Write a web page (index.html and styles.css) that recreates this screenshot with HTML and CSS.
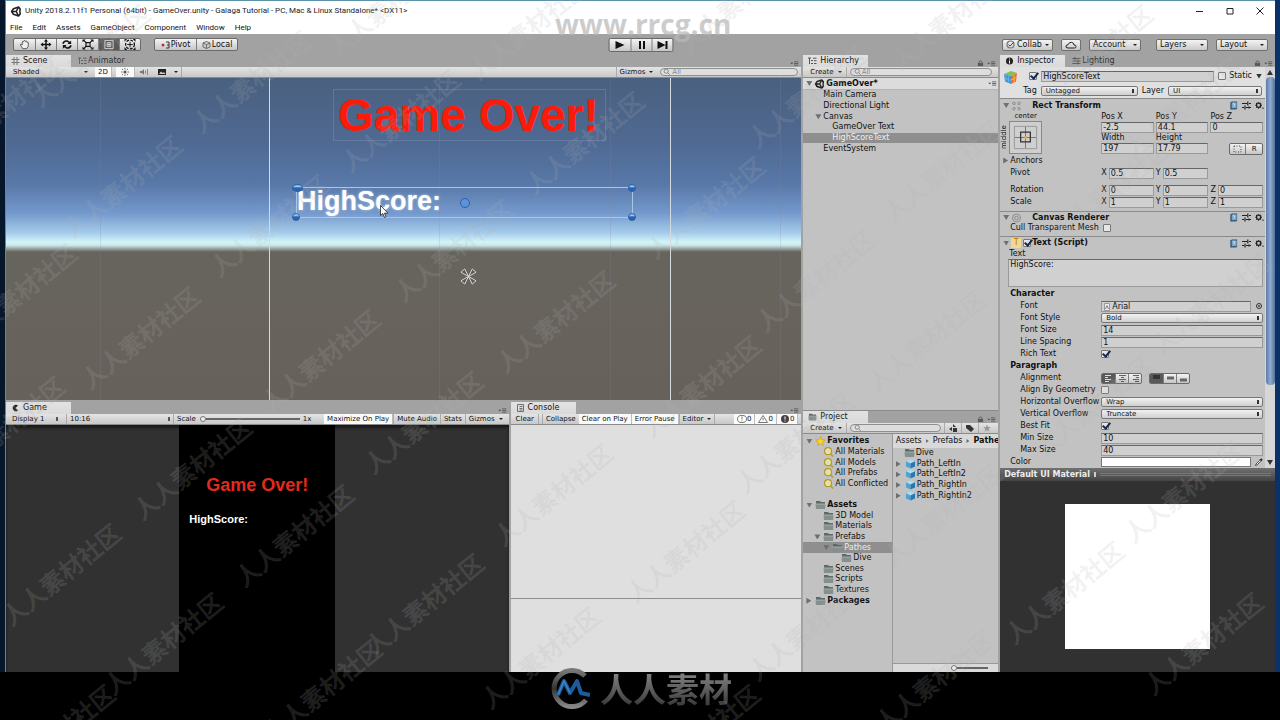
FILE: index.html
```html
<!DOCTYPE html>
<html lang="en">
<head>
<meta charset="utf-8">
<title>Unity 2018.2.11f1 Personal (64bit) - GameOver.unity</title>
<link rel="stylesheet" href="styles.css">
</head>
<body>
<svg class="defs" aria-hidden="true">
  <symbol id="unity" viewBox="0 0 12 12"><path d="M6.2 6 1.2 6 3.2 3 8.8 1.2M1.2 6 3.2 9 8.8 10.8M6.2 6 8.8 1.2 10.6 3.2 10.2 6 10.6 8.8 8.8 10.8 6.2 6" fill="none" stroke="currentColor" stroke-width="1.700" stroke-linejoin="round"/></symbol>
  <symbol id="folder" viewBox="0 0 11 10"><path d="M1 1h4l1 1h4v7H1z" fill="#5f6a69"/><path d="M.5 4h10l-.5 5H1z" fill="#84908e"/><path d="M.5 4h10" stroke="#b9c2c0" stroke-width=".7"/></symbol>
  <symbol id="search" viewBox="0 0 10 10"><circle cx="4.500" cy="4.200" r="3.500" fill="#efe79a" stroke="#b59a2c" stroke-width="1.200"/><circle cx="4.500" cy="4.200" r="1.800" fill="#d8dcc4"/><path d="M7 6.800 9.500 9.500" stroke="#b59a2c" stroke-width="1.600"/></symbol>
  <symbol id="lens" viewBox="0 0 10 10"><circle cx="4" cy="4" r="2.600" fill="none" stroke="#777"/><path d="M6 6 8.500 8.500" stroke="#777"/></symbol>
  <symbol id="cube" viewBox="0 0 10 10"><path d="M5 .5 9.500 2.300 5 4.500.5 2.300z" fill="#a9dcf5"/><path d="M.5 2.300 5 4.500v5L.5 7.500z" fill="#4da2d8"/><path d="M9.500 2.300 5 4.500v5l4.500-2z" fill="#2777b0"/></symbol>
  <symbol id="book" viewBox="0 0 9 10"><path d="M1 1.500 3 .5h5.500v8l-1 1H1z" fill="#33506f"/><path d="M2.500 1.500h5.500v6.500H2.500z" fill="#7ea5cb"/><path d="M4 3.500q1.300-1.500 2 0 .2.800-.8 1.300V6" fill="none" stroke="#fff" stroke-width=".8"/></symbol>
  <symbol id="preset" viewBox="0 0 9 9"><path d="M0 2.500h5M7 2.500h2M0 6.500h2M4 6.500h5M5.800.5v4M3 4.500v4M7 5.500v2" stroke="#222" stroke-width="1.200"/></symbol>
  <symbol id="gear" viewBox="0 0 10 9"><circle cx="4" cy="4.200" r="2.300" fill="none" stroke="#222" stroke-width="1.500"/><path d="M4 .5v1M4 7v1M.4 4.200h1M6.600 4.200h1M1.400 1.600l.8.8M5.900 6l.8.800M1.400 6.800l.8-.8M5.900 2.400l.8-.8" stroke="#222" stroke-width="1.200"/><path d="M8 7.500h1.800" stroke="#222"/></symbol>
  <symbol id="lock" viewBox="0 0 8 8"><path d="M1 4h6v3.500H1z" fill="#5a5a5a"/><path d="M2.300 4V2.500q1.700-2 3.400 0V4" fill="none" stroke="#5a5a5a"/></symbol>
  <symbol id="menu" viewBox="0 0 10 6"><path d="M0 2h3.500L1.800 4z" fill="#444"/><path d="M4.500 1h5M4.500 3h5M4.500 5h5" stroke="#555" stroke-width="1"/></symbol>
  <symbol id="grid" viewBox="0 0 8 8"><path d="M2.500 0v8M5.500 0v8M0 2.500h8M0 5.500h8" stroke="#777"/></symbol>
  <symbol id="tree" viewBox="0 0 9 8"><path d="M0 1h3M1.500 1v6M3 3.500h2M3 6.500h2M5 1.200h3.500M6 3.700h2.500M6 6.500h2.500" stroke="#555" fill="none"/></symbol>
</svg>

<main class="desktop">
<div class="window">
  <header class="title">
    <svg class="i12"><use href="#unity"/></svg>
    <span class="grow">Unity 2018.2.11f1 Personal (64bit) - GameOver.unity - Galaga Tutorial - PC, Mac &amp; Linux Standalone* &lt;DX11&gt;</span>
    <button class="wbtn" aria-label="Minimize"><svg viewBox="0 0 8 8"><path d="M0 4.500h7" stroke="#222"/></svg></button>
    <button class="wbtn" aria-label="Maximize"><svg viewBox="0 0 8 8"><path d="M1 1.500h6v5.500H1z" fill="none" stroke="#222"/></svg></button>
    <button class="wbtn" aria-label="Close"><svg viewBox="0 0 8 8"><path d="M.5.500l7 7M7.500.500l-7 7" stroke="#222"/></svg></button>
  </header>
  <nav class="menubar"><button>File</button><button>Edit</button><button>Assets</button><button>GameObject</button><button>Component</button><button>Window</button><button>Help</button></nav>

  <div class="toolbar">
    <div class="tools seg">
      <button aria-label="Hand"><svg viewBox="0 0 14 12"><path d="M4.500 10.500 2 6.500q0-1.200 1.200-.8L4 6.500V3q.7-1 1.400 0 .2-1.800 1.500-1.200.8.200.8 1 .8-1 1.500 0v1q1-.8 1.500.2L10.500 8 9 10.500z" fill="#eee" stroke="#444" stroke-width=".9"/></svg></button>
      <button aria-label="Move"><svg viewBox="0 0 14 12"><path d="M7 1.500v9M2.500 6h9" stroke="#111" stroke-width="1.600"/><path d="M7 0 9.200 2.800H4.800zM7 12 4.800 9.200h4.400zM1 6l2.800-2.200v4.400zM13 6l-2.800 2.200V3.800z" fill="#111"/></svg></button>
      <button aria-label="Rotate"><svg viewBox="0 0 14 12"><path d="M2.500 5Q4 1.500 7.500 2.300L10 4M11.500 7Q10 10.500 6.500 9.700L4 8" fill="none" stroke="#111" stroke-width="1.700"/><path d="M11.500 1.500v4h-4zM2.500 10.500v-4h4z" fill="#111"/></svg></button>
      <button aria-label="Scale"><svg viewBox="0 0 14 12"><path d="M4.800 4h4.400v4H4.800z" fill="none" stroke="#111" stroke-width="1.300"/><path d="M2 1.200 5 4M12 1.200 9 4M2 10.800 5 8M12 10.800 9 8" stroke="#111" stroke-width="1.300"/><path d="M1 .5h3.500L1 3.500zM13 .5v3L9.500.5zM1 11.500v-3l3.500 3zM13 11.500H9.500l3.500-3z" fill="#111"/></svg></button>
      <button class="on" aria-label="Rect"><svg viewBox="0 0 14 12"><path d="M2.500 1.500h9v9h-9z" fill="none" stroke="#ddd"/><path d="M5 4h4v4H5z" fill="none" stroke="#ddd"/><circle cx="7" cy="6" r="1" fill="#fff"/></svg></button>
      <button aria-label="Transform"><svg viewBox="0 0 14 12"><circle cx="7" cy="6" r="4.800" fill="none" stroke="#111" stroke-width="1.400" stroke-dasharray="3 1.500"/><path d="M7 3v6M4 6h6" stroke="#111"/><path d="M1 0h3L1 3zM13 0v3l-3-3zM1 12V9l3 3zM13 12h-3l3-3z" fill="#111"/></svg></button>
    </div>
    <div class="seg pivots">
      <button><svg viewBox="0 0 9 8"><circle cx="2" cy="4" r="1.500" fill="#b33"/><path d="M5 1h3v6H5M6 4h2" fill="none" stroke="#333"/></svg>Pivot</button>
      <button><svg viewBox="0 0 9 8"><path d="M1 2l3.500-1.500L8 2v4L4.500 7.500 1 6zM1 2l3.500 1.500L8 2M4.500 3.500v4" fill="#ccc" stroke="#555" stroke-width=".8"/></svg>Local</button>
    </div>
    <div class="seg play">
      <button aria-label="Play"><svg viewBox="0 0 12 10"><path d="M2 1v8l9-4z" fill="#111"/></svg></button>
      <button aria-label="Pause"><svg viewBox="0 0 12 10"><path d="M3.500 1h2v8h-2zM7.500 1h2v8h-2z" fill="#111"/></svg></button>
      <button aria-label="Step"><svg viewBox="0 0 12 10"><path d="M1 1v8l8-4zM9 1h2v8H9z" fill="#111"/></svg></button>
    </div>
    <div class="account">
      <button class="pill collab"><svg viewBox="0 0 9 9"><circle cx="4.500" cy="4.500" r="3.500" fill="none" stroke="#777" stroke-width="1.200"/><path d="M2.500 4.500 4 6l4-4" fill="none" stroke="#444"/></svg>Collab<i class="dn"></i></button>
      <button class="pill cl" aria-label="Cloud"><svg class="cloud" viewBox="0 0 12 8"><path d="M3 7Q.5 7 1 5q.5-1.300 2-1.200Q4 1 6.500 1.300 9 1.800 9 4q2 0 2 1.500T9.500 7z" fill="none" stroke="#222"/></svg></button>
      <button class="pill acc">Account<i class="dn"></i></button>
      <button class="pill lay">Layers<i class="dn"></i></button>
      <button class="pill out">Layout<i class="dn"></i></button>
    </div>
  </div>

  <div class="work">
    <div class="left">
      <section class="panel">
        <div class="tabs"><button class="tab on w65"><svg><use href="#grid"/></svg>Scene</button><button class="tab off"><svg><use href="#tree"/></svg>Animator</button><span class="grow"></span><svg class="menu"><use href="#menu"/></svg></div>
        <div class="bar">
          <button class="shade">Shaded<i class="dn"></i></button>
          <button class="lit">2D</button>
          <button class="lit wide" aria-label="Lighting"><svg viewBox="0 0 10 8"><circle cx="5" cy="4" r="1.500" fill="#555"/><path d="M5 0v1.500M5 6.500V8M1 4h1.500M7.500 4H9M2 1l1.200 1M8 1 6.800 2M2 7l1.200-1M8 7 6.800 6" stroke="#666"/></svg></button>
          <button aria-label="Audio"><svg viewBox="0 0 10 8"><path d="M1 3h2l2-2v6L3 5H1z" fill="#777"/><path d="M6.500 2.500v3M8.500 1v6" stroke="#888"/></svg></button>
          <button class="fx" aria-label="Effects"><svg viewBox="0 0 10 8"><path d="M1 1h8v6H1z" fill="#222"/><path d="M2 6l2-2.500L6 5l1-1 1.500 2z" fill="#ccc"/></svg></button>
          <button class="split fxm" aria-label="Effects menu"><i class="dn"></i></button>
          <span class="grow"></span>
          <button class="split">Gizmos<i class="dn"></i></button>
          <label class="find w138"><svg><use href="#lens"/></svg><input aria-label="Search scene" placeholder="All"></label>
        </div>
        <div class="scene">
          <div class="ln" style="left:94px"></div><div class="ln" style="left:433px"></div><div class="ln" style="left:604px"></div><div class="ln" style="left:774px"></div>
          <div class="frame"></div>
          <div class="over">Game Over!</div>
          <div class="score">HighScore:<i class="knob tl"></i><i class="knob tr"></i><i class="knob bl"></i><i class="knob br"></i><i class="knob mid"></i></div>
          <svg class="cursor" viewBox="0 0 9 13"><path d="M.5.500v10l2.300-2 1.700 4 1.500-.7-1.600-3.600H8z" fill="#fff" stroke="#222" stroke-width=".8"/></svg>
          <svg class="gizmo" viewBox="0 0 18 18"><path d="M9 9 1 4.500 5 1zM9 9l8-4.500L13 1zM9 9l-8 4.500L5 17zM9 9l8 4.500-4 3.500z" fill="#5558" stroke="#ddd" stroke-width="1"/></svg>
        </div>
      </section>
      <div class="lower">
        <section class="panel">
          <div class="tabs"><button class="tab on w65"><svg viewBox="0 0 8 8"><path d="M6.500 1.500A3.200 3.200 0 1 0 6.500 6.500L4 4z" fill="#222"/></svg>Game</button><span class="grow"></span><svg class="menu"><use href="#menu"/></svg></div>
          <div class="bar">
            <select class="disp" aria-label="Display"><option>Display 1</option></select>
            <select class="ratio" aria-label="Aspect"><option>10:16</option></select>
            <label class="scale">Scale<input type="range" min="1" max="5" value="1"></label><span class="one">1x</span>
            <span class="grow"></span>
            <button class="lit">Maximize On Play</button><button class="split">Mute Audio</button><button class="split">Stats</button><button class="split">Gizmos<i class="dn"></i></button>
          </div>
          <div class="game"><div class="screen"><p class="gover">Game Over!</p><p class="ghigh">HighScore:</p></div></div>
        </section>
        <section class="panel">
          <div class="tabs"><button class="tab on w65"><svg viewBox="0 0 8 8"><path d="M1 .5h6v7H1zM3 2.500h3M3 4.500h3M3 6h3" fill="#ddd" stroke="#555" stroke-width=".8"/></svg>Console</button><span class="grow"></span><svg class="menu"><use href="#menu"/></svg></div>
          <div class="bar cons">
            <button class="clear">Clear</button><span class="gap"></span><button class="split">Collapse</button><button class="lit">Clear on Play</button><button class="lit">Error Pause</button><button class="split">Editor<i class="dn"></i></button>
            <span class="grow edge"></span>
            <button class="lit"><svg viewBox="0 0 10 8"><ellipse cx="5" cy="4" rx="4.500" ry="3.600" fill="#fff" stroke="#777"/><path d="M5 1.500v3M5 5.500v1" stroke="#777"/></svg>0</button><button class="lit"><svg viewBox="0 0 10 8"><path d="M5 .5 9.500 7.500h-9z" fill="#fff" stroke="#777"/><path d="M5 3v2.500" stroke="#777"/></svg>0</button><button class="lit"><svg viewBox="0 0 10 8"><circle cx="5" cy="4" r="4" fill="#444"/><path d="M5 1.500v3M5 5.500v1" stroke="#fff"/></svg>0</button>
          </div>
          <div class="console"><div class="log"></div><div class="detail"></div></div>
        </section>
      </div>
    </div>

    <div class="middle">
      <section class="panel">
        <div class="tabs"><button class="tab on w65"><svg><use href="#tree"/></svg>Hierarchy</button><span class="grow"></span><svg class="lock"><use href="#lock"/></svg><svg class="menu"><use href="#menu"/></svg></div>
        <div class="bar"><button>Create<i class="dn"></i></button><label class="find grow split"><svg><use href="#lens"/></svg><input aria-label="Search hierarchy" placeholder="All"></label></div>
        <div class="hier">
          <div class="root"><i class="tri"></i><svg class="i10"><use href="#unity"/></svg><b class="grow">GameOver*</b><svg class="menu"><use href="#menu"/></svg></div>
          <ul class="list h6">
            <li class="d2">Main Camera</li><li class="d2">Directional Light</li><li class="d1"><i class="tri"></i>Canvas</li><li class="d3">GameOver Text</li><li class="d3 sel">HighScoreText</li><li class="d2">EventSystem</li>
          </ul>
        </div>
      </section>
      <section class="panel">
        <div class="tabs"><button class="tab on w65"><svg><use href="#folder"/></svg>Project</button><span class="grow"></span><svg class="lock"><use href="#lock"/></svg><svg class="menu"><use href="#menu"/></svg></div>
        <div class="bar"><button>Create<i class="dn"></i></button><label class="find split grow"><svg><use href="#lens"/></svg><input aria-label="Search project"></label>
          <button class="split" aria-label="Filter by type"><svg viewBox="0 0 10 8"><path d="M5 0 8 3H5zM1 5l3-2v4zM5 4h4v4H5z" fill="#333"/></svg></button><button class="split" aria-label="Filter by label"><svg viewBox="0 0 10 8"><path d="M1 1h4l4 4-3 3-5-4z" fill="#333"/></svg></button><button class="split" aria-label="Save search"><svg viewBox="0 0 10 10"><path d="M5 .5 6.300 3.700l3.400.3-2.600 2.200.8 3.300L5 7.700 2.100 9.500l.8-3.300L.3 4l3.400-.3z" fill="#999"/></svg></button></div>
        <div class="proj">
          <ul class="list h16">
            <li class="a0"><i class="tri"></i><svg class="i10" viewBox="0 0 10 10"><path d="M5 .5 6.300 3.700l3.400.3-2.600 2.200.8 3.300L5 7.700 2.100 9.500l.8-3.300L.3 4l3.400-.3z" fill="#ffd42a" stroke="#c89a10" stroke-width=".6"/></svg><b>Favorites</b></li>
            <li class="a2"><svg class="i10"><use href="#search"/></svg>All Materials</li><li class="a2"><svg class="i10"><use href="#search"/></svg>All Models</li><li class="a2"><svg class="i10"><use href="#search"/></svg>All Prefabs</li><li class="a2"><svg class="i10"><use href="#search"/></svg>All Conflicted</li>
            <li></li>
            <li class="a0"><i class="tri"></i><svg class="i10"><use href="#folder"/></svg><b>Assets</b></li>
            <li class="a2"><svg class="i10"><use href="#folder"/></svg>3D Model</li><li class="a2"><svg class="i10"><use href="#folder"/></svg>Materials</li><li class="a1"><i class="tri"></i><svg class="i10"><use href="#folder"/></svg>Prefabs</li><li class="a3 sel"><i class="tri"></i><svg class="i10"><use href="#folder"/></svg>Pathes</li><li class="a4"><svg class="i10"><use href="#folder"/></svg>Dive</li><li class="a2"><svg class="i10"><use href="#folder"/></svg>Scenes</li><li class="a2"><svg class="i10"><use href="#folder"/></svg>Scripts</li><li class="a2"><svg class="i10"><use href="#folder"/></svg>Textures</li>
            <li class="a0"><i class="tri r"></i><svg class="i10"><use href="#folder"/></svg><b>Packages</b></li>
          </ul>
          <div class="files">
            <div class="crumbs">Assets<i class="tri r"></i>Prefabs<i class="tri r"></i><b>Pathes</b></div>
            <ul class="list h5">
              <li class="a1f"><svg class="i10"><use href="#folder"/></svg>Dive</li><li><i class="tri r"></i><svg class="i10"><use href="#cube"/></svg>Path_LeftIn</li><li><i class="tri r"></i><svg class="i10"><use href="#cube"/></svg>Path_LeftIn2</li><li><i class="tri r"></i><svg class="i10"><use href="#cube"/></svg>Path_RightIn</li><li><i class="tri r"></i><svg class="i10"><use href="#cube"/></svg>Path_RightIn2</li>
            </ul>
            <div class="zoom"><input type="range" aria-label="Icon size" min="0" max="10" value="0"></div>
          </div>
        </div>
      </section>
    </div>

    <section class="panel insp">
      <div class="tabs"><button class="tab on w65"><svg viewBox="0 0 8 8"><circle cx="4" cy="4" r="3.500" fill="#222"/><path d="M4 1.500v1M4 3.500v3" stroke="#fff"/></svg>Inspector</button><button class="tab off"><svg viewBox="0 0 8 8"><path d="M0 1.500h8M0 4h8M0 6.500h8M2.500 0v3M5.500 2.500v5" stroke="#555"/></svg>Lighting</button><span class="grow"></span><svg class="lock"><use href="#lock"/></svg><svg class="menu"><use href="#menu"/></svg></div>
      <div class="ibody">
        <div class="icontent">
          <div class="ohead">
            <svg class="ocube" viewBox="0 0 15 15"><path d="M1 4 8 1l6 2-6 3z" fill="#7cc35a"/><path d="M1 4l7 2v8l-6-2.500z" fill="#3f95d0"/><path d="M14 3 8 6v8l5-2.500z" fill="#ec6b2d"/><path d="M3 5v6M5.500 5.500v7M1.500 8l6.500 2.500" stroke="#69b5e5" stroke-width=".8"/><path d="M11 4.500v8M8 10l5.500-2.500" stroke="#f7b93c"/></svg>
            <div class="oline"><input type="checkbox" checked aria-label="Active"><input class="fld grow" aria-label="Name" value="HighScoreText"><label class="stat"><input type="checkbox">Static</label><i class="tri dk"></i></div>
            <div class="oline two"><label for="tag">Tag</label><select id="tag" class="pop tagw"><option>Untagged</option></select><label for="layer">Layer</label><select id="layer" class="pop grow"><option>UI</option></select></div>
          </div>

          <div class="comp rt">
            <div class="chead"><i class="tri"></i><svg class="i10" viewBox="0 0 10 10"><path d="M3.500 3.500v-2q-2-1.500-2.500 1 0 1 2.500 1M6.500 3.500v-2q2-1.500 2.500 1 0 1-2.500 1M3.500 6.500v2q-2 1.500-2.500-1 0-1 2.500-1M6.500 6.500v2q2 1.500 2.500-1 0-1-2.500-1" fill="none" stroke="#888" stroke-width=".9"/></svg><b class="grow">Rect Transform</b><svg class="hi"><use href="#book"/></svg><svg class="hi"><use href="#preset"/></svg><svg class="hi"><use href="#gear"/></svg></div>
            <div class="rect">
              <div class="anch"><span class="ac">center</span><span class="am">middle</span>
                <button aria-label="Anchor presets"><svg viewBox="0 0 32 32"><path d="M4.500 4.500h23v23h-23z" fill="none" stroke="#999"/><path d="M16 5v22M5 16h22" stroke="#c5564a"/><path d="M11 10.500h10v10H11z" fill="none" stroke="#333" stroke-width="1.300"/><circle cx="16" cy="16" r="1.500" fill="#e7a03c"/></svg></button></div>
              <div class="g3">
                <label for="px">Pos X</label><label for="py">Pos Y</label><label for="pz">Pos Z</label>
                <input class="fld" id="px" value="-2.5"><input class="fld" id="py" value="44.1"><input class="fld" id="pz" value="0">
                <label for="rw">Width</label><label for="rh">Height</label><span></span>
                <input class="fld" id="rw" value="197"><input class="fld" id="rh" value="17.79"><div class="seg br2"><button aria-label="Blueprint"><svg viewBox="0 0 9 8"><path d="M1 1h7v6H1z" fill="none" stroke="#444" stroke-dasharray="1 1.500"/></svg></button><button>R</button></div>
              </div>
            </div>
            <div class="anchors"><i class="tri r"></i>Anchors</div>
            <div class="vec"><span>Pivot</span><label>X<input class="fld" value="0.5"></label><label>Y<input class="fld" value="0.5"></label></div>
            <div class="vec rot"><span>Rotation</span><label>X<input class="fld" value="0"></label><label>Y<input class="fld" value="0"></label><label>Z<input class="fld" value="0"></label></div>
            <div class="vec"><span>Scale</span><label>X<input class="fld" value="1"></label><label>Y<input class="fld" value="1"></label><label>Z<input class="fld" value="1"></label></div>
          </div>

          <div class="comp cr">
            <div class="chead"><i class="tri"></i><svg class="i10" viewBox="0 0 10 10"><circle cx="5" cy="5" r="4" fill="none" stroke="#888" stroke-width=".9"/><circle cx="5" cy="5" r="1.800" fill="none" stroke="#888" stroke-width=".9"/></svg><b class="grow">Canvas Renderer</b><svg class="hi"><use href="#book"/></svg><svg class="hi"><use href="#preset"/></svg><svg class="hi"><use href="#gear"/></svg></div>
            <label class="cull">Cull Transparent Mesh<input type="checkbox"></label>
          </div>

          <div class="comp tx">
            <div class="chead"><i class="tri"></i><span class="ticon">T</span><input type="checkbox" checked aria-label="Text enabled"><b class="grow">Text (Script)</b><svg class="hi"><use href="#book"/></svg><svg class="hi"><use href="#preset"/></svg><svg class="hi"><use href="#gear"/></svg></div>
            <label class="tl" for="txt">Text</label>
            <textarea id="txt">HighScore:</textarea>
            <div class="form">
              <b>Character</b>
              <label for="f1">Font</label><div class="obj"><input class="fld grow" id="f1" value="Arial"><svg class="doc" viewBox="0 0 6 8"><path d="M.5.500h5v7h-5z" fill="#eee" stroke="#888" stroke-width=".8"/><path d="M1.500 6 3 2.500 4.500 6" fill="none" stroke="#555" stroke-width=".7"/></svg><svg class="pick" viewBox="0 0 8 8"><circle cx="4" cy="4" r="2.500" fill="none" stroke="#333"/><circle cx="4" cy="4" r=".9" fill="#333"/></svg></div>
              <label for="f2">Font Style</label><select class="pop" id="f2"><option>Bold</option></select>
              <label for="f3">Font Size</label><input class="fld" id="f3" value="14">
              <label for="f4">Line Spacing</label><input class="fld" id="f4" value="1">
              <label for="f5">Rich Text</label><input type="checkbox" id="f5" checked>
              <b>Paragraph</b>
              <span>Alignment</span><div class="align"><div class="seg al"><button class="on" aria-label="Left"><svg viewBox="0 0 9 8"><path d="M1 1.500h6M1 3.500h3M1 5.500h6M1 7.500h4" stroke="#ddd"/></svg></button><button aria-label="Center"><svg viewBox="0 0 9 8"><path d="M1 1.500h7M3 3.500h3M1 5.500h7M3 7.500h3" stroke="#555"/></svg></button><button aria-label="Right"><svg viewBox="0 0 9 8"><path d="M2 1.500h6M5 3.500h3M2 5.500h6M4 7.500h4" stroke="#555"/></svg></button></div><div class="seg al"><button class="on" aria-label="Top"><svg viewBox="0 0 9 8"><path d="M1 1h7v4H1z" fill="#333"/></svg></button><button aria-label="Middle"><svg viewBox="0 0 9 8"><path d="M1 2.500h7v3H1z" fill="#666"/></svg></button><button aria-label="Bottom"><svg viewBox="0 0 9 8"><path d="M1 4.500h7v3H1z" fill="#666"/></svg></button></div></div>
              <label for="f6">Align By Geometry</label><input type="checkbox" id="f6">
              <label for="f7">Horizontal Overflow</label><select class="pop" id="f7"><option>Wrap</option></select>
              <label for="f8">Vertical Overflow</label><select class="pop" id="f8"><option>Truncate</option></select>
              <label for="f9">Best Fit</label><input type="checkbox" id="f9" checked>
              <label for="f10">Min Size</label><input class="fld" id="f10" value="10">
              <label for="f11">Max Size</label><input class="fld" id="f11" value="40">
              <span class="color">Color</span><div class="obj"><button class="swatch" aria-label="Color"></button><svg class="pick" viewBox="0 0 8 8"><path d="M.5 7.500 1 6l3.500-3.500 1 1L2 7z" fill="#eee" stroke="#333" stroke-width=".8"/><path d="M4.500 1.500 6.500.5l1 1-1 2z" fill="#222"/></svg></div>
            </div>
          </div>
        </div>
        <div class="scroll" aria-hidden="true"><i class="tri up"></i><div class="thumb"></div><i class="tri dk"></i></div>
      </div>
      <div class="phead"><b>Default UI Material</b><i class="ud"></i><span class="grip"></span></div>
      <div class="preview"><div class="white"></div></div>
    </section>
  </div>
</div>
</main>

<footer class="brand">
  <svg viewBox="0 0 44 42"><defs><linearGradient id="ring" x1="0" y1="0" x2="0" y2="1"><stop offset="0" stop-color="#777"/><stop offset=".5" stop-color="#333"/><stop offset="1" stop-color="#888"/></linearGradient></defs><path d="M37 9A18 18 0 1 0 38 33" fill="none" stroke="url(#ring)" stroke-width="5"/><path d="M10 28 16 14l6 12 7-12 4 12 9 2" fill="none" stroke="#1d5c9c" stroke-width="4" stroke-linejoin="round"/><path d="M10 28 16 14l6 12" fill="none" stroke="#3a86cc" stroke-width="1.500"/></svg>
  <span lang="zh">人人素材</span>
</footer>
<div class="site">www.rrcg.cn</div>
<div class="marks" id="marks" lang="zh" aria-hidden="true"></div>
<script src="marks.js"></script>
</body>
</html>
```
FILE: marks.js
```js
const centers = [
  [3,106],[251,81],[400,120],[584,142],[122,186],[269,225],[453,250],[17,294],[140,337],[320,360],
  [555,321],[5,427],[192,468],[294,535],[423,422],[61,574],[424,604],[163,643],[553,494],[540,657],
  [322,690],[528,28],[55,735],[950,18],[738,0],[1093,55],[807,96],[705,207],[942,170],[1183,106],
  [1110,190],[815,280],[926,340],[701,386],[1093,405],[1211,303],[795,441],[685,551],[942,514],
  [1064,592],[1183,491],[807,629],[1203,643],[934,680],[90,55],[387,5],[700,735]
];
const layer = document.getElementById("marks");
for (const [x, y] of centers) {
  const s = document.createElement("span");
  s.textContent = "人人素材社区";
  s.style.left = x + "px";
  s.style.top = y + "px";
  layer.append(s);
}
```
FILE: styles.css
```css
* { box-sizing: border-box; }
body { margin: 0; min-height: 100vh; display: grid; grid-template-rows: 1fr 48px; background: #000; color: #111; font: 8px/10px "DejaVu Sans", sans-serif; position: relative; overflow: hidden; }
button, input, select, textarea { font: inherit; color: inherit; margin: 0; padding: 0; border: 0; border-radius: 0; background: none; min-width: 0; }
ul, p { margin: 0; padding: 0; list-style: none; }
svg { flex: none; }
.defs { position: absolute; width: 0; height: 0; }
.grow { flex: 1; min-width: 0; }
.desktop { background: linear-gradient(90deg, #06162b 50%, #0b3268 50%); padding: 0 5px; display: grid; }
.window { display: flex; flex-direction: column; background: #a2a2a2; border-top: 1px solid #5b93ad; border-left: 1px solid #5d87a8; }
.title { height: 20px; background: #fff; display: flex; align-items: center; padding: 0 2px 0 4px; gap: 3px; font: 8px/12px Roboto, sans-serif; color: #222; }
.i12 { width: 12px; height: 11px; }
.i10 { width: 11px; height: 10px; }
.wbtn { width: 27px; height: 12px; display: grid; place-items: center; }
.wbtn svg { width: 8px; height: 8px; }
.menubar { height: 13px; background: #fff; display: flex; gap: 10px; padding: 0 4px; font: 8px/12px Roboto, sans-serif; }
.toolbar { height: 21px; display: flex; align-items: center; padding: 0 7px; position: relative; }
.seg { display: flex; border: 1px solid #6a6a6a; border-radius: 2px; background: linear-gradient(#f4f4f4, #c6c6c6); overflow: hidden; }
.seg button { display: flex; align-items: center; justify-content: center; gap: 1px; border-left: 1px solid #7c7c7c; height: 11px; }
.seg button:first-child { border-left: 0; }
.seg .on { background: #595959; }
.tools button { width: 21px; }
.tools svg { width: 14px; height: 11px; }
.pivots { margin-left: 13px; }
.pivots button { width: 41px; }
.pivots svg { width: 9px; height: 8px; }
.play { position: absolute; left: 50%; translate: -50% 0; }
.play button { width: 21px; height: 12px; }
.play svg { width: 12px; height: 10px; }
.account { margin-left: auto; display: flex; gap: 8px; }
.pill { height: 12px; border: 1px solid #6f6f6f; border-radius: 2px; background: linear-gradient(#f4f4f4, #cacaca); display: flex; align-items: center; gap: 2px; padding: 0 3px; }
.pill svg { width: 9px; height: 9px; }
.pill svg.cloud { width: 12px; height: 8px; }
.pill .dn { margin-left: auto; }
.collab { width: 51px; }
.cl { width: 20px; }
.acc { width: 52px; }
.lay { width: 52px; margin-left: 7px; }
.out { width: 52px; }
.dn { display: inline-block; border: 2px solid transparent; border-top-color: #222; border-bottom: 0; margin-left: 4px; }
.tri { flex: none; width: 6px; height: 5px; background: #6f6f6f; clip-path: polygon(0 0, 100% 0, 50% 100%); margin-right: 2px; }
.tri.r { width: 5px; height: 6px; clip-path: polygon(0 0, 100% 50%, 0 100%); margin-right: 3px; }
.tri.dk { background: #333; margin: 0; }
.tri.up { background: #333; clip-path: polygon(50% 0, 100% 100%, 0 100%); margin: 0; }

.work { flex: 1; min-height: 0; display: grid; grid-template-columns: 796fr 195fr 275fr; gap: 2px; }
.left { display: grid; grid-template-rows: 345fr 270fr; gap: 2px; min-width: 0; }
.lower { display: grid; grid-template-columns: 503fr 291fr; gap: 2px; min-height: 0; }
.middle { display: grid; grid-template-rows: 356fr 261fr; min-width: 0; }
.panel { display: flex; flex-direction: column; min-width: 0; min-height: 0; }
.tabs { height: 12px; display: flex; flex: none; align-items: stretch; padding-right: 1px; }
.tab { display: flex; align-items: center; gap: 3px; padding: 0 7px; }
.tab svg { width: 9px; height: 8px; }
.tab.on { background: linear-gradient(#e2e2e2, #dadada); padding-left: 5px; }
.tab.off { color: #333; gap: 1px; }
.w65 { width: 65px; }
.menu { width: 9px; height: 5px; align-self: flex-end; margin: 0 1px 1px 3px; }
.lock { width: 7px; height: 8px; align-self: flex-end; }
.bar { height: 11px; flex: none; display: flex; align-items: stretch; background: linear-gradient(#e4e4e4, #c8c8c8); border-bottom: 1px solid #8a8a8a; font-size: 7px; padding: 0 3px; }
.bar button { padding: 0 4px; display: flex; align-items: center; white-space: nowrap; }
.bar button svg { width: 10px; height: 8px; }
.bar .lit { background: #fafafa; border-right: 1px solid #bbb; padding: 0 3px; }
.bar .wide { padding: 0 4px; margin-left: 4px; }
.bar .split { border-left: 1px solid #aaa; padding: 0 3px; }
.bar .shade { width: 83px; margin-right: 3px; }
.bar .fxm { border-right: 1px solid #aaa; border-left: 0; }
.bar .fx { padding-right: 0; }
.shade .dn { margin-left: auto; }
.find { display: flex; align-items: center; padding: 0 6px 0 4px; position: relative; }
.find svg { position: absolute; left: 7px; width: 8px; height: 8px; }
.find input { flex: 1; height: 8px; border: 1px solid #8f8f8f; border-radius: 4px; background: #dedede; padding-left: 11px; line-height: 6px; }
.find input::placeholder { color: #888; opacity: 1; }
.w138 { width: 142px; padding-right: 0; }

.scene { flex: 1; position: relative; overflow: hidden; background: linear-gradient(#4a607f 0%, #4f6992 20%, #5878a8 33%, #7499cc 42%, #a5cbea 48%, #d2f5f9 51%, #c9e6e6 52%, #67645e 54%, #67615b 100%); }
.scene::after { content: ""; position: absolute; top: 0; bottom: 0; left: 263px; width: 400px; border: solid #d5dadf; border-width: 0 1px; }
.ln { position: absolute; top: 0; bottom: 0; width: 1px; background: #8893; }
.frame { position: absolute; left: 327px; top: 11px; width: 273px; height: 52px; border: 1px solid #7d98b866; }
.over { position: absolute; left: 332px; top: 11px; font: bold 46px/52px "Liberation Sans", Arial, sans-serif; color: #fb1b08; white-space: nowrap; }
.score { position: absolute; left: 290px; top: 109px; width: 337px; height: 31px; border: 1px solid #a9c6e6; font: bold 27px/27px "Liberation Sans", Arial, sans-serif; color: #fff; text-shadow: 0 0 3px #fff8; }
.knob { position: absolute; width: 8px; height: 8px; border-radius: 50%; background: linear-gradient(#8fc0f0 35%, #2a62ac 45%); border: 1px solid #2a5fa8; }
.tl.knob { left: -5px; top: -4px; } .tr.knob { right: -4px; top: -4px; } .bl.knob { left: -5px; bottom: -4px; } .br.knob { right: -4px; bottom: -4px; }
.mid.knob { left: 163px; top: 10px; width: 10px; height: 10px; background: #5c93d8; }
.cursor { position: absolute; left: 374px; top: 127px; width: 9px; height: 13px; }
.gizmo { position: absolute; left: 454px; top: 190px; width: 17px; height: 17px; }

select { appearance: none; background: conic-gradient(#555 0 0) right 3px center / 2px 4px no-repeat; }
.disp { width: 52px; padding-left: 3px; } .ratio { width: 107px; border-left: 1px solid #aaa; margin-left: 5px; padding-left: 3px; }
.scale { display: flex; align-items: center; gap: 4px; padding-left: 3px; border-left: 1px solid #aaa; }
.scale input { width: 100px; }
.one { align-self: center; padding-left: 3px; }
input[type=range] { appearance: none; height: 2px; background: #666; }
input[type=range]::-webkit-slider-thumb { appearance: none; width: 6px; height: 6px; border: 1px solid #777; border-radius: 50%; background: #eee; }
.game { flex: 1; background: #313131; display: flex; justify-content: center; box-shadow: inset 0 3px 3px #1a1a1a; }
.screen { width: 156px; background: #000; font-family: "Liberation Sans", Arial, sans-serif; font-weight: bold; }
.gover { color: #e32a1c; font-size: 18px; line-height: 20px; text-align: center; padding-top: 50px; }
.ghigh { color: #fff; font-size: 11px; line-height: 12px; padding: 18px 0 0 10px; }
.bar .clear { padding: 0 4px 0 2px; }
.gap { width: 4px; border-left: 1px solid #aaa; }
.edge { border-left: 1px solid #aaa; }
.console { flex: 1; background: #dfdfdf; display: grid; grid-template-rows: 175fr 73fr; }
.log { border-bottom: 1px solid #8d8d8d; }

.hier { flex: 1; background: #c2c2c2; border-bottom: 1px solid #8a8a8a; }
.root { height: 12px; background: #dcdcdc; display: flex; align-items: center; padding-left: 3px; border-bottom: 1px solid #b4b4b4; }
.root b { padding-left: 1px; }
.root .menu { align-self: center; }
.list { display: grid; grid-auto-rows: 1fr; align-content: stretch; }
.list li { display: flex; align-items: center; white-space: nowrap; min-height: 0; gap: 1px; }
.h6 { height: 64px; } .h16 { height: 172px; padding-top: 2px; } .h5 { height: 53px; }
.list .d1 { padding-left: 12px; } .list .d2 { padding-left: 20px; } .list .d3 { padding-left: 29px; }
.list .d1 { gap: 0; }
.list .sel { background: #8f8f8f; color: #eee; }
.list .a0 { padding-left: 3px; } .list .a1 { padding-left: 11px; } .list .a2 { padding-left: 20px; } .list .a3 { padding-left: 20px; } .list .a4 { padding-left: 38px; } .list .a1f { padding-left: 11px; }
.proj { flex: 1; display: grid; grid-template-columns: 88fr 106fr; background: #c2c2c2; min-height: 0; }
.files { border-left: 1px solid #999; display: flex; flex-direction: column; min-width: 0; }
.crumbs { height: 14px; background: #d9d9d9; display: flex; align-items: center; gap: 3px; padding-left: 3px; overflow: hidden; }
.crumbs .tri.r { width: 3px; height: 4px; margin: 0 1px; }
.files li { padding-left: 3px; }
.zoom { margin-top: auto; height: 9px; background: #dadada; border-top: 1px solid #999; display: flex; align-items: center; justify-content: flex-end; padding-right: 10px; }
.zoom input { width: 37px; }

.insp { background: #a2a2a2; }
.ibody { display: flex; background: #c2c2c2; }
.icontent { flex: 1; min-width: 0; }
.scroll { width: 10px; background: #d6d6d6; display: flex; flex-direction: column; align-items: center; padding: 3px 0; gap: 2px; }
.thumb { flex: none; width: 9px; height: 78%; border-radius: 4px; background: linear-gradient(90deg, #5e7ca5, #8dabd0, #54719a); margin-bottom: auto; }
.ohead { height: 31px; background: #e0e0e0; display: grid; grid-template-columns: 24px 1fr; grid-template-rows: 16px 13px; padding: 1px 3px 0; }
.ocube { width: 15px; height: 15px; grid-row: span 2; margin-top: 2px; }
.oline { display: flex; align-items: center; gap: 4px; padding-left: 2px; }
.oline.two { margin-left: -6px; }
.tagw { width: 97px; }
.stat { display: flex; align-items: center; gap: 3px; }
input[type=checkbox] { appearance: none; width: 8px; height: 8px; border: 1px solid #777; border-radius: 1px; background: #e6e6e6; position: relative; flex: none; }
input[type=checkbox]:checked::after { content: ""; position: absolute; left: 2px; top: -2px; width: 3px; height: 6px; border: solid #142850; border-width: 0 2px 2px 0; rotate: 40deg; }
.fld { height: 11px; width: 100%; background: #d0d0d0; border: 1px solid #9a9a9a; border-top-color: #666; padding: 0 1px; line-height: 9px; }
.pop { height: 10px; border: 1px solid #777; border-radius: 2px; background: conic-gradient(#333 0 0) right 3px center / 2px 4px no-repeat, linear-gradient(#f2f2f2, #cfcfcf); font-size: 7px; line-height: 8px; padding: 0 4px; }
.comp { border-top: 1px solid #8a8a8a; }
.chead { display: flex; align-items: center; height: 13px; padding-left: 3px; padding-right: 1px; }
.chead b { padding-left: 10px; }
.tx .chead b { padding-left: 1px; }
.ticon { width: 10px; height: 10px; background: #f3d98a; color: #b47a10; text-align: center; margin-right: 2px; }
.hi { width: 9px; height: 9px; margin-left: 4px; }
.rect { display: grid; grid-template-columns: 101px 1fr; padding-right: 2px; }
.anch { display: grid; grid-template-columns: 9px 33px; grid-template-rows: 9px 33px; align-content: start; }
.ac { grid-column: 2; font-size: 7px; line-height: 9px; text-align: center; }
.am { writing-mode: vertical-rl; rotate: 180deg; font-size: 7px; line-height: 9px; text-align: center; }
.anch button { background: #cfcfcf; border: 1px solid #888; }
.anch svg { width: 31px; height: 31px; display: block; }
.g3 { display: grid; grid-template-columns: 1fr 1fr 1fr; grid-template-rows: 10px 11px 10px 11px; column-gap: 2px; align-items: center; }
.br2 { justify-self: end; width: 34px; }
.br2 button { flex: 1; font-size: 7px; height: 10px; }
.br2 svg { width: 9px; height: 8px; }
.anchors { height: 13px; display: flex; align-items: center; padding-left: 3px; }
.anchors .tri { margin-right: 2px; }
.vec { height: 12px; display: grid; grid-template-columns: 99px 1fr 1fr 1fr; column-gap: 2px; align-items: center; padding-right: 2px; }
.vec span { padding-left: 10px; }
.vec label { display: flex; align-items: center; gap: 2px; }
.vec label .fld { flex: 1; }
.rot { margin-top: 5px; }
.rt { padding-bottom: 3px; }
.cr .chead { height: 11px; }
.cr { padding-bottom: 3px; }
.cull { height: 10px; display: flex; align-items: center; gap: 4px; padding-left: 10px; }
.tx .chead { height: 12px; }
.tl { display: block; padding-left: 9px; }
textarea { display: block; width: calc(100% - 10px); margin: 0 0 1px 8px; height: 28px; border: 1px solid #9a9a9a; border-top-color: #666; background: #d0d0d0; resize: none; padding: 0 1px; }
.form { display: grid; grid-template-columns: 91px 1fr; grid-auto-rows: 12px; align-items: center; padding: 0 2px 0 10px; }
.form b { grid-column: 1 / -1; }
.form > label, .form > span { padding-left: 10px; white-space: nowrap; }
.form > .color { padding-left: 0; }
.obj { display: flex; align-items: center; gap: 4px; position: relative; }
.obj .fld { padding-left: 10px; }
.doc { position: absolute; left: 3px; top: 2px; width: 6px; height: 8px; }
.pick { width: 8px; height: 8px; }
.swatch { flex: 1; height: 10px; background: #fff; border: 1px solid #777; }
.align { display: flex; gap: 7px; }
.seg.al button { width: 13px; height: 9px; }
.al svg { width: 9px; height: 8px; }
.phead { height: 13px; flex: none; background: linear-gradient(#707070, #444); color: #eee; display: flex; align-items: center; gap: 4px; padding: 0 4px; }
.ud { width: 2px; height: 5px; background: #ccc; }
.grip { flex: 1; height: 3px; border: solid #777; border-width: 1px 0; }
.preview { flex: 1; background: #313131; display: grid; place-items: center; }
.white { width: 145px; height: 145px; background: #fff; }

.brand { display: flex; justify-content: center; align-items: center; gap: 8px; padding-bottom: 17px; font: bold 33px/36px "Noto Sans CJK SC", sans-serif; position: relative; }
.brand svg { width: 44px; height: 42px; }
.brand span { background: linear-gradient(#888, #3a3a3a); background-clip: text; color: transparent; }
.site { position: absolute; left: 555px; top: 5px; font: bold 28px/38px "Open Sans", sans-serif; color: #b9b9b9bb; pointer-events: none; }
.marks { position: absolute; inset: 0; overflow: hidden; pointer-events: none; }
.marks span { position: absolute; translate: -50% -50%; rotate: -39deg; font: 500 24px/24px "Noto Sans CJK SC", sans-serif; color: #b0b0b02a; -webkit-text-stroke: 1px #c8c8c812; white-space: nowrap; }
```
